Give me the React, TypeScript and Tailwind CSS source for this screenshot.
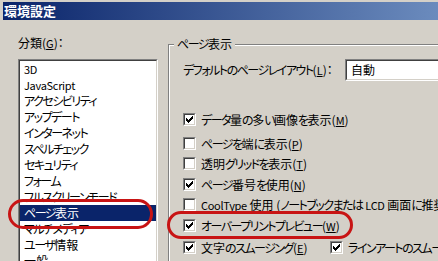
import React from "react";

function T({ t }: { t: string }) {
  const parts = t.split(/([\u3040-\u30ff]+|[A-Za-z0-9]+)/).filter((p) => p !== "");
  return (
    <>
      {parts.map((p, i) => {
        if (/^[\u3040-\u30ff]+$/.test(p))
          return (
            <span key={i} className="tracking-[-1.5px]">
              {p}
            </span>
          );
        if (/^[A-Za-z0-9]+$/.test(p))
          return (
            <span key={i} className="text-[11px] tracking-[-0.3px]">
              {p}
            </span>
          );
        return <span key={i}>{p}</span>;
      })}
    </>
  );
}

function CheckBox({ checked }: { checked: boolean }) {
  const cols = [2, 3, 4, 3, 2, 1, 0];
  return (
    <span className="block w-[13px] h-[13px] shrink-0 border border-t-[#808080] border-l-[#808080] border-r-white border-b-white">
      <span className="relative block w-full h-full border border-t-[#404040] border-l-[#404040] border-r-[#d4d0c8] border-b-[#d4d0c8] bg-white">
        {checked && (
          <svg
            className="absolute left-[1px] top-[1px]"
            width="7"
            height="7"
            viewBox="0 0 7 7"
            shapeRendering="crispEdges"
          >
            {cols.map((y, x) => (
              <rect key={x} x={x} y={y} width="1" height="3" fill="#000" />
            ))}
          </svg>
        )}
      </span>
    </span>
  );
}

function Label({ t, acc }: { t: string; acc?: string }) {
  return (
    <>
      <T t={t} />
      {acc && (
        <>
          (<span className="underline underline-offset-[1px] text-[11px]">{acc}</span>)
        </>
      )}
    </>
  );
}

function Row({
  checked,
  t,
  acc,
  className = "",
}: {
  checked: boolean;
  t: string;
  acc?: string;
  className?: string;
}) {
  return (
    <div className={`flex items-center h-[13px] gap-[5px] whitespace-nowrap ${className}`}>
      <CheckBox checked={checked} />
      <span className="leading-[13px]">
        <Label t={t} acc={acc} />
      </span>
    </div>
  );
}

const items = [
  "3D",
  "JavaScript",
  "アクセシビリティ",
  "アップデート",
  "インターネット",
  "スペルチェック",
  "セキュリティ",
  "フォーム",
  "フルスクリーンモード",
  "ページ表示",
  "マルチメディア",
  "ユーザ情報",
  "一般",
];

export default function App() {
  return (
    <div className="relative w-[438px] h-[261px] overflow-hidden bg-[#d4d0c8] text-black text-[12px] font-['Noto_Sans_CJK_JP',sans-serif] [font-feature-settings:'palt']">
      {/* title bar */}
      <div className="ml-[3px] mt-[2px] h-[18px] flex items-center pl-[1px] bg-[linear-gradient(to_right,#0a246a_0px,#a6caf0_700px)]">
        <span className="text-white font-bold text-[13px] leading-[18px]">環境設定</span>
      </div>

      <div className="flex">
        {/* left column */}
        <div className="pl-[18px] w-[158px] shrink-0">
          <div className="mt-[17px] h-[12px] leading-[12px] whitespace-nowrap">
            <Label t="分類" acc="G" />：
          </div>
          <div className="mt-[10px] w-[140px] h-[230px] border border-t-[#808080] border-l-[#808080] border-r-white border-b-white">
            <div className="h-full bg-white border border-t-[#404040] border-l-[#404040] border-r-[#d4d0c8] border-b-[#d4d0c8]">
              {items.map((it) => (
                <div
                  key={it}
                  className={`h-[16px] leading-[16px] pl-[4px] whitespace-nowrap ${
                    it === "ページ表示" ? "bg-[#0a246a] text-white" : ""
                  }`}
                >
                  <T t={it} />
                </div>
              ))}
            </div>
          </div>
        </div>

        {/* right group box */}
        <div className="ml-[10px] mt-[24px] relative w-[300px] h-[240px] shrink-0 border-l border-t border-[#808080]">
          <div className="absolute left-[5px] top-[-8px] px-[3px] bg-[#d4d0c8] leading-[14px] whitespace-nowrap">
            <T t="ページ表示" />
          </div>
          <div className="h-full border-l border-t border-white pl-[13px]">
            <div className="mt-[13px] h-[22px] flex items-center">
              <span className="w-[162px] shrink-0 whitespace-nowrap leading-[14px]">
                <Label t="デフォルトのページレイアウト" acc="L" />：
              </span>
              <div className="flex-1 h-[22px] border border-t-[#808080] border-l-[#808080] border-r-white border-b-white">
                <div className="h-full bg-white flex items-center pl-[4px] border border-t-[#404040] border-l-[#404040] border-r-[#d4d0c8] border-b-[#d4d0c8]">
                  自動
                </div>
              </div>
            </div>

            <div className="flex flex-col">
              <Row checked className="mt-[32px]" t="データ量の多い画像を表示" acc="M" />
              <Row checked={false} className="mt-[11px]" t="ページを端に表示" acc="P" />
              <Row checked={false} className="mt-[7px]" t="透明グリッドを表示" acc="T" />
              <Row checked className="mt-[8px]" t="ページ番号を使用" acc="N" />
              <Row
                checked={false}
                className="mt-[7px]"
                t="CoolType 使用 (ノートブックまたは LCD 画面に推奨)"
              />
              <Row checked className="mt-[8px]" t="オーバープリントプレビュー" acc="W" />
              <div className="mt-[9px] flex items-center">
                <div className="w-[147px] shrink-0">
                  <Row checked t="文字のスムージング" acc="E" />
                </div>
                <Row checked t="ラインアートのスムージング" />
              </div>
            </div>
          </div>
        </div>
      </div>

      {/* red annotation ellipses */}
      <div className="absolute left-[8px] top-[199px] w-[145px] h-[30px] rounded-full border-[3px] border-[#c81414]" />
      <div className="absolute left-[167px] top-[211px] w-[186px] h-[28px] rounded-full border-[3px] border-[#c81414]" />
    </div>
  );
}
